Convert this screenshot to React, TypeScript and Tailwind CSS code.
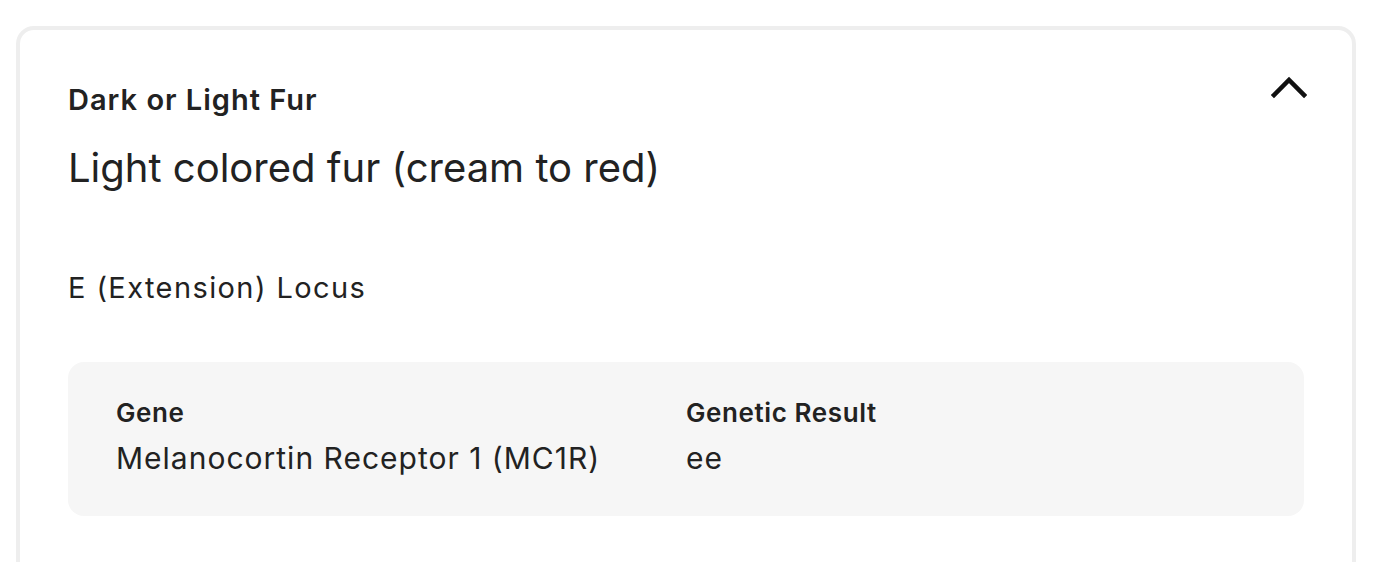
import React from 'react';

const ChevronUp = () => (
  <svg width="36" height="24" viewBox="0 0 36 24" fill="none">
    <polyline points="3,20 18,5 33,20" stroke="#111" strokeWidth="4.5" strokeLinecap="square" />
  </svg>
);

export default function App() {
  return (
    <div className="min-h-screen bg-white pt-[26px] pl-[16px] pr-[26px] font-['Inter',sans-serif] text-[#222]">
      <div className="border-[4px] border-[#eeeeee] rounded-[18px] px-[48px] pt-[52px] pb-[80px]">
        <div className="flex justify-between items-start">
          <h2 className="text-[29px] leading-[36px] font-semibold tracking-[1px]">Dark or Light Fur</h2>
          <button className="-mt-[7px] mr-[-3px]">
            <ChevronUp />
          </button>
        </div>
        <p className="mt-[26px] text-[40px] leading-[48px]">Light colored fur (cream to red)</p>
        <p className="mt-[78px] text-[29px] leading-[36px] tracking-[1.4px]">E (Extension) Locus</p>
        <div className="mt-[56px] bg-[#f6f6f6] rounded-[16px] px-[48px] pt-[35px] pb-[40px] grid grid-cols-2">
          <div>
            <div className="text-[26px] leading-[32px] font-semibold tracking-[0.6px]">Gene</div>
            <div className="mt-[11px] text-[30px] leading-[36px] tracking-[1px]">Melanocortin Receptor 1 (MC1R)</div>
          </div>
          <div>
            <div className="text-[26px] leading-[32px] font-semibold tracking-[0.6px]">Genetic Result</div>
            <div className="mt-[11px] text-[30px] leading-[36px] tracking-[1px]">ee</div>
          </div>
        </div>
      </div>
    </div>
  );
}
